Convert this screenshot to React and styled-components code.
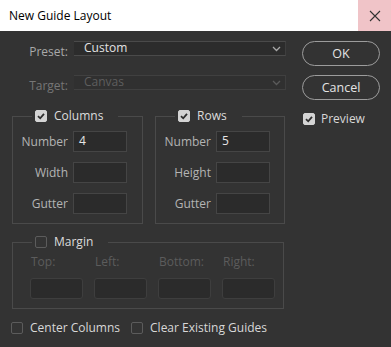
import React from 'react';
import styled, { createGlobalStyle } from 'styled-components';

const GlobalStyle = createGlobalStyle`
  html, body {
    margin: 0;
    padding: 0;
    background: #333333;
  }
  body {
    font-family: "Open Sans", "Liberation Sans", sans-serif;
    font-size: 11.5px;
  }
`;

function Check({ checked }) {
  return (
    <Box checked={checked}>
      {checked && (
        <svg width="10" height="10" viewBox="0 0 10 10">
          <path d="M2 5.2 L4.2 7.3 L8 2.8" fill="none" stroke="#2e2e2e" strokeWidth="1.8" />
        </svg>
      )}
    </Box>
  );
}

function Chevron({ dim }) {
  return (
    <svg width="9" height="6" viewBox="0 0 9 6">
      <path d="M1 1 L4.5 4.5 L8 1" fill="none" stroke={dim ? '#5a5a5a' : '#a8a8a8'} strokeWidth="1.3" />
    </svg>
  );
}

export default function App() {
  return (
    <Window>
      <GlobalStyle />
      <TitleBar>
        <Title>New Guide Layout</Title>
        <CloseButton>
          <svg width="12" height="12" viewBox="0 0 12 12">
            <path d="M1 1 L11 11 M11 1 L1 11" stroke="#333" strokeWidth="1.1" />
          </svg>
        </CloseButton>
      </TitleBar>
      <Body>
        <Main>
          <SelectRow>
            <SelectLabel>Preset:</SelectLabel>
            <Select>
              <span>Custom</span>
              <Chevron />
            </Select>
          </SelectRow>
          <SelectRow spaced>
            <SelectLabel dim>Target:</SelectLabel>
            <Select disabled>
              <span>Canvas</span>
              <Chevron dim />
            </Select>
          </SelectRow>

          <Groups>
            <Group width={131}>
              <Legend>
                <Check checked />
                <LegendText>Columns</LegendText>
              </Legend>
              <FieldGrid>
                <FieldLabel>Number</FieldLabel>
                <Input>4</Input>
                <FieldLabel>Width</FieldLabel>
                <Input />
                <FieldLabel>Gutter</FieldLabel>
                <Input />
              </FieldGrid>
            </Group>
            <Group width={130}>
              <Legend>
                <Check checked />
                <LegendText>Rows</LegendText>
              </Legend>
              <FieldGrid>
                <FieldLabel>Number</FieldLabel>
                <Input>5</Input>
                <FieldLabel>Height</FieldLabel>
                <Input />
                <FieldLabel>Gutter</FieldLabel>
                <Input />
              </FieldGrid>
            </Group>
          </Groups>

          <MarginGroup>
            <Legend>
              <Check />
              <LegendText>Margin</LegendText>
            </Legend>
            <MarginGrid>
              <MarginLabel>Top:</MarginLabel>
              <MarginLabel>Left:</MarginLabel>
              <MarginLabel>Bottom:</MarginLabel>
              <MarginLabel>Right:</MarginLabel>
              <MarginInput />
              <MarginInput />
              <MarginInput />
              <MarginInput />
            </MarginGrid>
          </MarginGroup>

          <BottomRow>
            <CheckItem>
              <Check />
              <CheckText>Center Columns</CheckText>
            </CheckItem>
            <CheckItem>
              <Check />
              <CheckText>Clear Existing Guides</CheckText>
            </CheckItem>
          </BottomRow>
        </Main>

        <Side>
          <PillButton>OK</PillButton>
          <PillButton>Cancel</PillButton>
          <PreviewItem>
            <Check checked />
            <CheckText>Preview</CheckText>
          </PreviewItem>
        </Side>
      </Body>
    </Window>
  );
}

const Window = styled.div`
  width: 391px;
  height: 347px;
  background: #333333;
  box-sizing: border-box;
  overflow: hidden;
  color: #d6d6d6;
`;

const TitleBar = styled.div`
  height: 31px;
  background: #ffffff;
  display: flex;
  align-items: center;
  justify-content: space-between;
`;

const Title = styled.div`
  padding-left: 9px;
  font-size: 12px;
  color: #000000;
  margin-top: -1px;
`;

const CloseButton = styled.div`
  width: 33px;
  height: 31px;
  background: #f0c4c8;
  display: flex;
  align-items: center;
  justify-content: center;
`;

const Body = styled.div`
  display: flex;
  padding-top: 10px;
`;

const Main = styled.div`
  width: 302px;
  padding-left: 12px;
  box-sizing: border-box;
  display: flex;
  flex-direction: column;
`;

const Side = styled.div`
  width: 78px;
  display: flex;
  flex-direction: column;
  gap: 9px;
`;

const SelectRow = styled.div`
  display: flex;
  gap: 6px;
  height: 15px;
  margin-top: ${(p) => (p.spaced ? '19px' : '0')};
`;

const SelectLabel = styled.div`
  width: 56px;
  height: 15px;
  text-align: right;
  font-size: 12px;
  line-height: 15px;
  position: relative;
  top: 3px;
  color: ${(p) => (p.dim ? '#767676' : '#a9a9a9')};
`;

const Select = styled.div`
  width: 212px;
  height: 15px;
  box-sizing: border-box;
  background: ${(p) => (p.disabled ? '#303030' : '#2c2c2c')};
  border-top: 1px solid ${(p) => (p.disabled ? '#404040' : '#4a4a4a')};
  border-bottom: 1px solid ${(p) => (p.disabled ? '#404040' : '#4a4a4a')};
  border-right: 1px solid #3e3e3e;
  display: flex;
  align-items: center;
  justify-content: space-between;
  padding: 0 4px 0 10px;
  font-size: 12px;
  line-height: 13px;
  color: ${(p) => (p.disabled ? '#5e5e5e' : '#e2e2e2')};
  span {
    margin-top: -3px;
  }
`;

const Groups = styled.div`
  display: flex;
  gap: 12px;
  margin-top: 19px;
`;

const Group = styled.fieldset`
  width: ${(p) => p.width}px;
  box-sizing: border-box;
  margin: 0;
  padding: 8px 0 9px 0;
  border: 1px solid #4a4a4a;
  min-width: 0;
`;

const MarginGroup = styled(Group)`
  width: 272px;
  margin-top: 11px;
  padding: 6px 0 9px 0;
`;

const Legend = styled.legend`
  display: flex;
  align-items: center;
  gap: 7px;
  height: 14px;
  margin-left: 19px;
  padding: 0 15px 0 3px;
`;

const LegendText = styled.span`
  font-size: 12px;
  color: #dcdcdc;
  line-height: 14px;
`;

const Box = styled.span`
  width: 12px;
  height: 12px;
  box-sizing: border-box;
  border-radius: 2px;
  flex-shrink: 0;
  display: flex;
  align-items: center;
  justify-content: center;
  background: ${(p) => (p.checked ? '#d4d4d4' : '#343434')};
  border: 1px solid ${(p) => (p.checked ? '#d4d4d4' : '#5c5c5c')};
`;

const FieldGrid = styled.div`
  display: grid;
  grid-template-columns: 55px 54px;
  column-gap: 5px;
  row-gap: 10px;
  align-items: center;
`;

const FieldLabel = styled.div`
  text-align: right;
  font-size: 12px;
  color: #b4b4b4;
`;

const Input = styled.div`
  height: 21px;
  box-sizing: border-box;
  background: #2b2b2b;
  border: 1px solid #454545;
  padding-left: 5px;
  font-size: 12px;
  line-height: 18px;
  color: #e6e6e6;
`;

const MarginGrid = styled.div`
  display: grid;
  grid-template-columns: repeat(4, 53px);
  column-gap: 11px;
  row-gap: 9px;
  padding-left: 17px;
`;

const MarginLabel = styled.div`
  font-size: 12px;
  line-height: 14px;
  color: #5c5c5c;
  padding-left: 1px;
`;

const MarginInput = styled.div`
  height: 21px;
  box-sizing: border-box;
  background: #2b2b2b;
  border: 1px solid #3e3e3e;
  border-radius: 3px;
`;

const BottomRow = styled.div`
  display: flex;
  gap: 11px;
  margin-top: 12px;
  margin-left: -1px;
`;

const CheckItem = styled.div`
  display: flex;
  align-items: center;
  gap: 7px;
`;

const CheckText = styled.span`
  font-size: 12px;
  color: #d8d8d8;
  line-height: 14px;
`;

const PillButton = styled.div`
  height: 25px;
  box-sizing: border-box;
  border: 1px solid #9c9c9c;
  border-radius: 13px;
  display: flex;
  align-items: center;
  justify-content: center;
  font-size: 12.5px;
  color: #e4e4e4;
`;

const PreviewItem = styled(CheckItem)`
  margin-top: 3px;
  padding-left: 1px;
  gap: 6px;
`;
